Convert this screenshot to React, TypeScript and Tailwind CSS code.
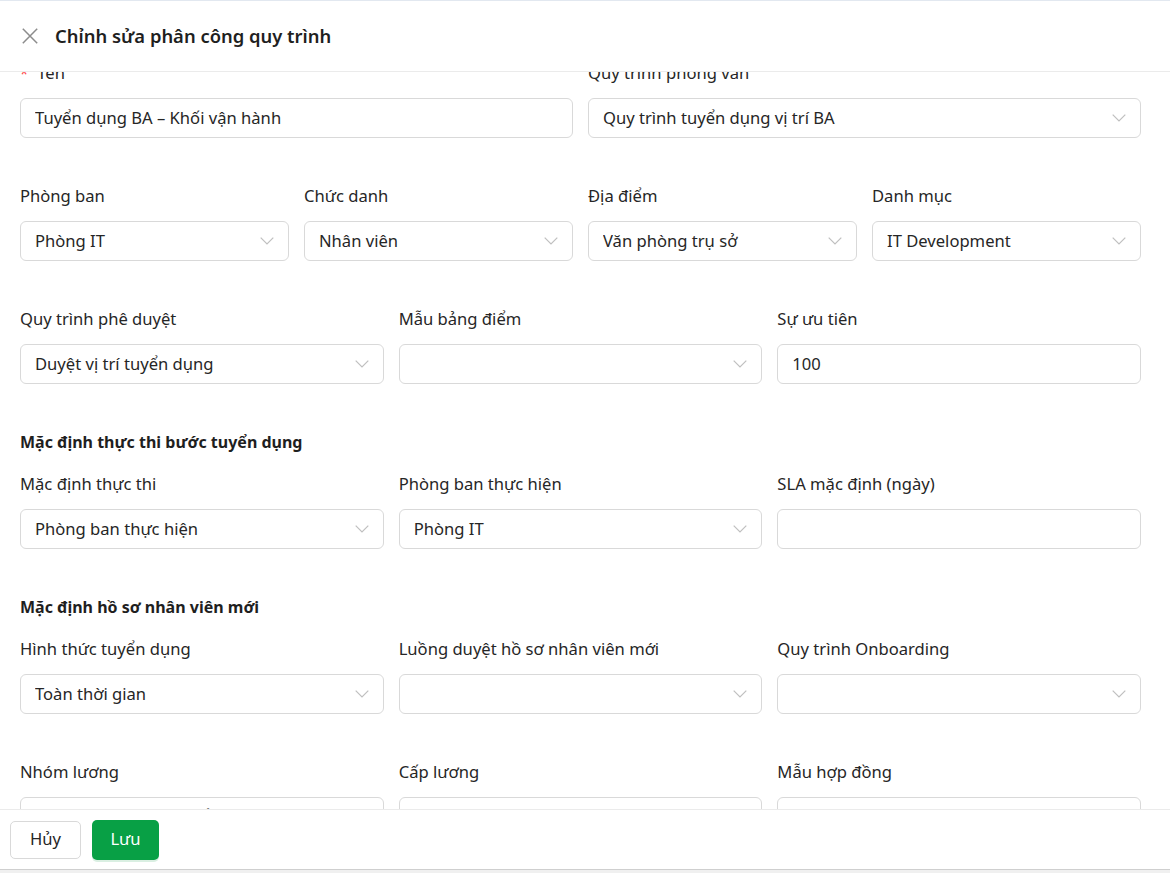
type Field = {
  label: string;
  value?: string;
  kind: "input" | "select";
  required?: boolean;
};

const rows: { cols: string; fields: Field[]; heading?: string }[] = [
  {
    cols: "grid-cols-2",
    fields: [
      { label: "Tên", value: "Tuyển dụng BA – Khối vận hành", kind: "input", required: true },
      { label: "Quy trình phỏng vấn", value: "Quy trình tuyển dụng vị trí BA", kind: "select" },
    ],
  },
  {
    cols: "grid-cols-4",
    fields: [
      { label: "Phòng ban", value: "Phòng IT", kind: "select" },
      { label: "Chức danh", value: "Nhân viên", kind: "select" },
      { label: "Địa điểm", value: "Văn phòng trụ sở", kind: "select" },
      { label: "Danh mục", value: "IT Development", kind: "select" },
    ],
  },
  {
    cols: "grid-cols-3",
    fields: [
      { label: "Quy trình phê duyệt", value: "Duyệt vị trí tuyển dụng", kind: "select" },
      { label: "Mẫu bảng điểm", kind: "select" },
      { label: "Sự ưu tiên", value: "100", kind: "input" },
    ],
  },
  {
    cols: "grid-cols-3",
    heading: "Mặc định thực thi bước tuyển dụng",
    fields: [
      { label: "Mặc định thực thi", value: "Phòng ban thực hiện", kind: "select" },
      { label: "Phòng ban thực hiện", value: "Phòng IT", kind: "select" },
      { label: "SLA mặc định (ngày)", kind: "input" },
    ],
  },
  {
    cols: "grid-cols-3",
    heading: "Mặc định hồ sơ nhân viên mới",
    fields: [
      { label: "Hình thức tuyển dụng", value: "Toàn thời gian", kind: "select" },
      { label: "Luồng duyệt hồ sơ nhân viên mới", kind: "select" },
      { label: "Quy trình Onboarding", kind: "select" },
    ],
  },
  {
    cols: "grid-cols-3",
    fields: [
      { label: "Nhóm lương", value: "Nhóm lương tiêu chuẩn", kind: "select" },
      { label: "Cấp lương", kind: "select" },
      { label: "Mẫu hợp đồng", kind: "select" },
    ],
  },
];

const Chevron = () => (
  <svg width="14" height="8" viewBox="0 0 14 8" fill="none" className="shrink-0">
    <polyline points="0.7,0.7 7,7 13.3,0.7" stroke="#bfbfbf" strokeWidth="1.2" />
  </svg>
);

const FormField = ({ field }: { field: Field }) => (
  <div className="flex flex-col">
    <div className="mb-[13px] flex h-6 items-center text-[16.6px] leading-6 text-[#262626]">
      {field.required && <span className="mr-[9px] text-[15px] text-[#ff4d4f]">*</span>}
      {field.label}
    </div>
    <div className="flex h-10 items-center rounded-md border border-[#d9d9d9] bg-white pl-[14px] pr-[14px] text-[16.6px] text-[#262626]">
      <span className="flex-1 truncate">{field.value}</span>
      {field.kind === "select" && <Chevron />}
    </div>
  </div>
);

export default function App() {
  return (
    <div
      className="flex h-[873px] w-[1170px] flex-col bg-[#f0f0f0]"
      style={{ fontFamily: '"Noto Sans", sans-serif' }}
    >
      <div className="flex h-[870px] flex-col border-t border-[#e2e8f0] bg-white">
        <div className="flex h-[71px] shrink-0 items-center border-b border-[#ebebeb] pl-[22px]">
          <svg width="16" height="16" viewBox="0 0 16 16" fill="none">
            <path d="M0.8 0.8 15.2 15.2 M15.2 0.8 0.8 15.2" stroke="#8c8c8c" strokeWidth="1.5" />
          </svg>
          <span className="ml-[17px] text-[18.4px] font-semibold text-[#1f1f1f]">
            Chỉnh sửa phân công quy trình
          </span>
        </div>

        <div className="flex-1 overflow-hidden">
          <div className="-mt-[11px] pl-5 pr-[29px]">
            {rows.map((row, i) => (
              <div key={i} className="mb-[46px]">
                {row.heading && (
                  <div className="mb-[18px] h-6 text-[16px] font-bold leading-6 text-[#1f1f1f]">
                    {row.heading}
                  </div>
                )}
                <div className={`grid gap-x-[15px] ${row.cols}`}>
                  {row.fields.map((f) => (
                    <FormField key={f.label} field={f} />
                  ))}
                </div>
              </div>
            ))}
          </div>
        </div>

        <div className="flex h-[61px] shrink-0 items-center gap-[11px] border-t border-[#ebebeb] border-b border-b-[#cfcfcf] pl-[10px]">
          <button className="h-[38px] w-[71px] rounded-[5px] border border-[#d9d9d9] bg-white text-[16.6px] text-[#262626]">
            Hủy
          </button>
          <button className="h-10 w-[67px] rounded-[5px] bg-[#08a045] text-[16.6px] text-white shadow-[0_2px_0_rgba(5,145,60,0.15)]">
            Lưu
          </button>
        </div>
      </div>
    </div>
  );
}
